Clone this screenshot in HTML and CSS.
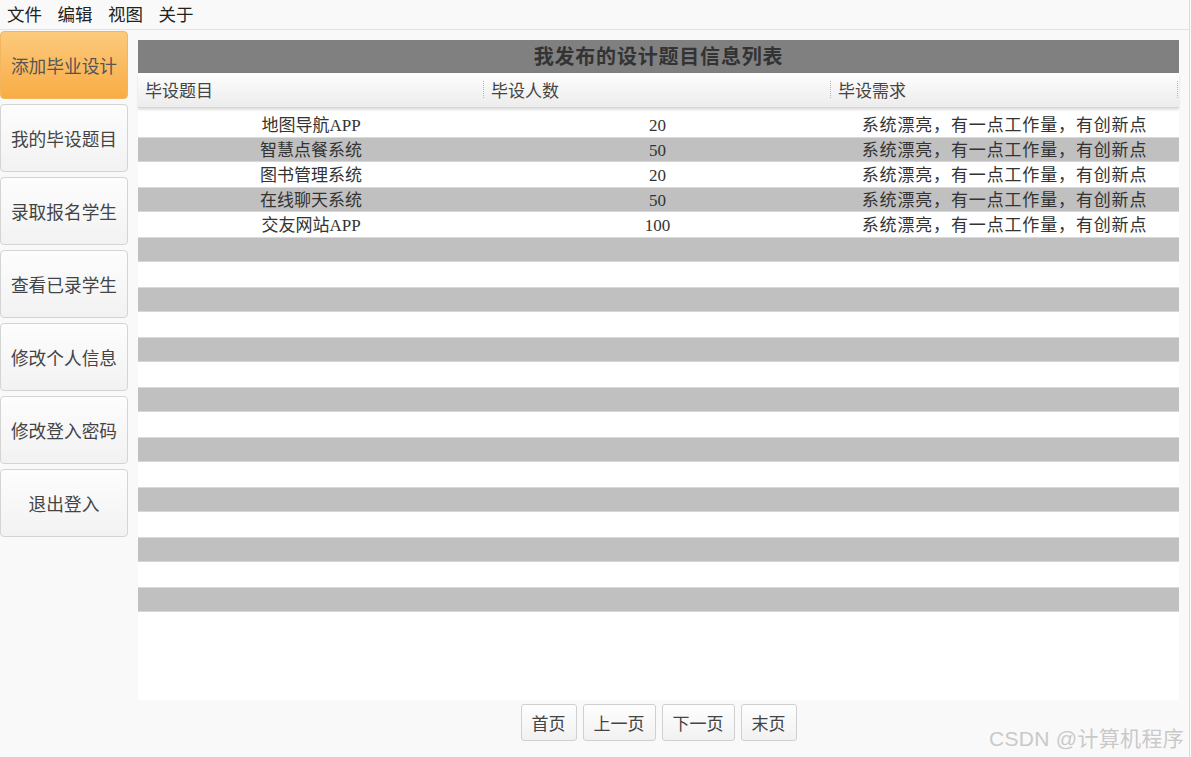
FILE: index.html
```html
<!DOCTYPE html>
<html lang="zh-CN">
<head>
<meta charset="utf-8">
<title>毕业设计管理</title>
<link rel="stylesheet" href="styles.css">
</head>
<body>
<div class="app">
  <nav class="menubar">
    <span class="menu-item">文件</span>
    <span class="menu-item">编辑</span>
    <span class="menu-item">视图</span>
    <span class="menu-item">关于</span>
  </nav>
  <div class="main">
    <aside class="sidebar">
      <button class="side-btn active">添加毕业设计</button>
      <button class="side-btn">我的毕设题目</button>
      <button class="side-btn">录取报名学生</button>
      <button class="side-btn">查看已录学生</button>
      <button class="side-btn">修改个人信息</button>
      <button class="side-btn">修改登入密码</button>
      <button class="side-btn">退出登入</button>
    </aside>
    <section class="content">
      <div class="panel">
        <h1 class="panel-title">我发布的设计题目信息列表</h1>
        <div class="grid-head">
          <div class="head-cell">毕设题目</div>
          <div class="head-cell">毕设人数</div>
          <div class="head-cell">毕设需求</div>
        </div>
        <div class="grid-body">
          <div class="row"><span>地图导航APP</span><span>20</span><span class="req">系统漂亮，有一点工作量，有创新点</span></div>
          <div class="row alt"><span>智慧点餐系统</span><span>50</span><span class="req">系统漂亮，有一点工作量，有创新点</span></div>
          <div class="row"><span>图书管理系统</span><span>20</span><span class="req">系统漂亮，有一点工作量，有创新点</span></div>
          <div class="row alt"><span>在线聊天系统</span><span>50</span><span class="req">系统漂亮，有一点工作量，有创新点</span></div>
          <div class="row"><span>交友网站APP</span><span>100</span><span class="req">系统漂亮，有一点工作量，有创新点</span></div>
          <div class="row alt"></div>
          <div class="row"></div>
          <div class="row alt"></div>
          <div class="row"></div>
          <div class="row alt"></div>
          <div class="row"></div>
          <div class="row alt"></div>
          <div class="row"></div>
          <div class="row alt"></div>
          <div class="row"></div>
          <div class="row alt"></div>
          <div class="row"></div>
          <div class="row alt"></div>
          <div class="row"></div>
          <div class="row alt"></div>
        </div>
      </div>
      <div class="pager">
        <button class="page-btn">首页</button>
        <button class="page-btn">上一页</button>
        <button class="page-btn">下一页</button>
        <button class="page-btn">末页</button>
      </div>
    </section>
  </div>
  <div class="watermark">CSDN @计算机程序</div>
</div>
</body>
</html>
```
FILE: styles.css
```css
* { box-sizing: border-box; }

html, body {
  margin: 0;
  padding: 0;
}

body {
  background: #f9f9f9;
  font-family: "Liberation Serif", "Noto Sans CJK SC", serif;
  color: #333;
  width: 1191px;
  height: 757px;
  overflow: hidden;
}

.app {
  position: relative;
  width: 1190px;
  height: 757px;
  border-right: 1px solid #dcdcdc;
}

/* top menu */
.menubar {
  height: 30px;
  display: flex;
  align-items: center;
  gap: 15.5px;
  padding: 0 0 1px 7px;
  border-bottom: 1px solid #dfe4ea;
  font-family: "Noto Sans CJK SC", sans-serif;
  font-size: 17.5px;
  color: #222;
}

.menu-item {
  line-height: 28px;
}

.main {
  display: flex;
  gap: 10px;
  padding-top: 1px;
}

/* left navigation */
.sidebar {
  width: 128px;
  display: flex;
  flex-direction: column;
  gap: 5px;
}

.side-btn {
  height: 68px;
  margin: 0;
  padding: 0;
  border: 1px solid #d4d4d4;
  border-radius: 4px;
  background: linear-gradient(#fdfdfd, #f2f2f2);
  font-family: "Liberation Serif", "Noto Sans CJK SC", serif;
  font-size: 17.7px;
  color: #444;
  text-align: center;
}

.side-btn.active {
  border-color: #f3b660;
  background: linear-gradient(#fcca7c, #f9ac45);
  color: #555;
}

/* list panel */
.content {
  width: 1041px;
  display: flex;
  flex-direction: column;
}

.panel {
  margin-top: 9px;
  background: #fff;
  height: 660px;
}

.panel-title {
  margin: 0;
  height: 33px;
  background: #808080;
  color: #333;
  font-size: 20px;
  font-weight: bold;
  text-align: center;
  line-height: 34px;
  letter-spacing: 0.8px;
}

.grid-head {
  display: grid;
  grid-template-columns: 346px 347px 347px;
  height: 35px;
  background: linear-gradient(#fefefe, #ececec);
  box-shadow: 0 2px 2px rgba(0, 0, 0, 0.12);
  border-bottom: 1px solid #d6d6d6;
}

/* dotted column divider drawn on the right edge of each header cell */
.head-cell {
  padding: 3px 0 0 7px;
  font-size: 17px;
  line-height: 32px;
  color: #444;
  background-image: repeating-linear-gradient(#b5b5b5 0 1px, transparent 1px 2px);
  background-size: 1px 18px;
  background-position: right 0 top 8px;
  background-repeat: no-repeat;
}

.grid-body {
  padding-top: 4px;
}

.row {
  display: grid;
  grid-template-columns: 346px 347px 347px;
  height: 25px;
  align-items: center;
  font-size: 17px;
  color: #333;
  text-align: center;
  line-height: 25px;
  padding-top: 1px;
}

.row.alt {
  background: #c0c0c0;
  box-shadow: inset 0 1px 0 #dadada, inset 0 -1px 0 #d6d6d6;
}

.row span {
  white-space: nowrap;
}

.row .req {
  letter-spacing: 0.85px;
}

/* paging */
.pager {
  display: flex;
  justify-content: center;
  gap: 6px;
  padding-top: 4px;
}

.page-btn {
  height: 37px;
  padding: 0 10px;
  margin: 0;
  border: 1px solid #d0d0d0;
  border-radius: 3px;
  background: linear-gradient(#fefefe, #f1f1f1);
  font-family: "Liberation Serif", "Noto Sans CJK SC", serif;
  font-size: 17px;
  color: #444;
}

.watermark {
  position: absolute;
  right: 5px;
  bottom: 5px;
  font-family: "Liberation Sans", "Noto Sans CJK SC", sans-serif;
  font-size: 21px;
  color: #c9c9c9;
  letter-spacing: 0.3px;
}
```
